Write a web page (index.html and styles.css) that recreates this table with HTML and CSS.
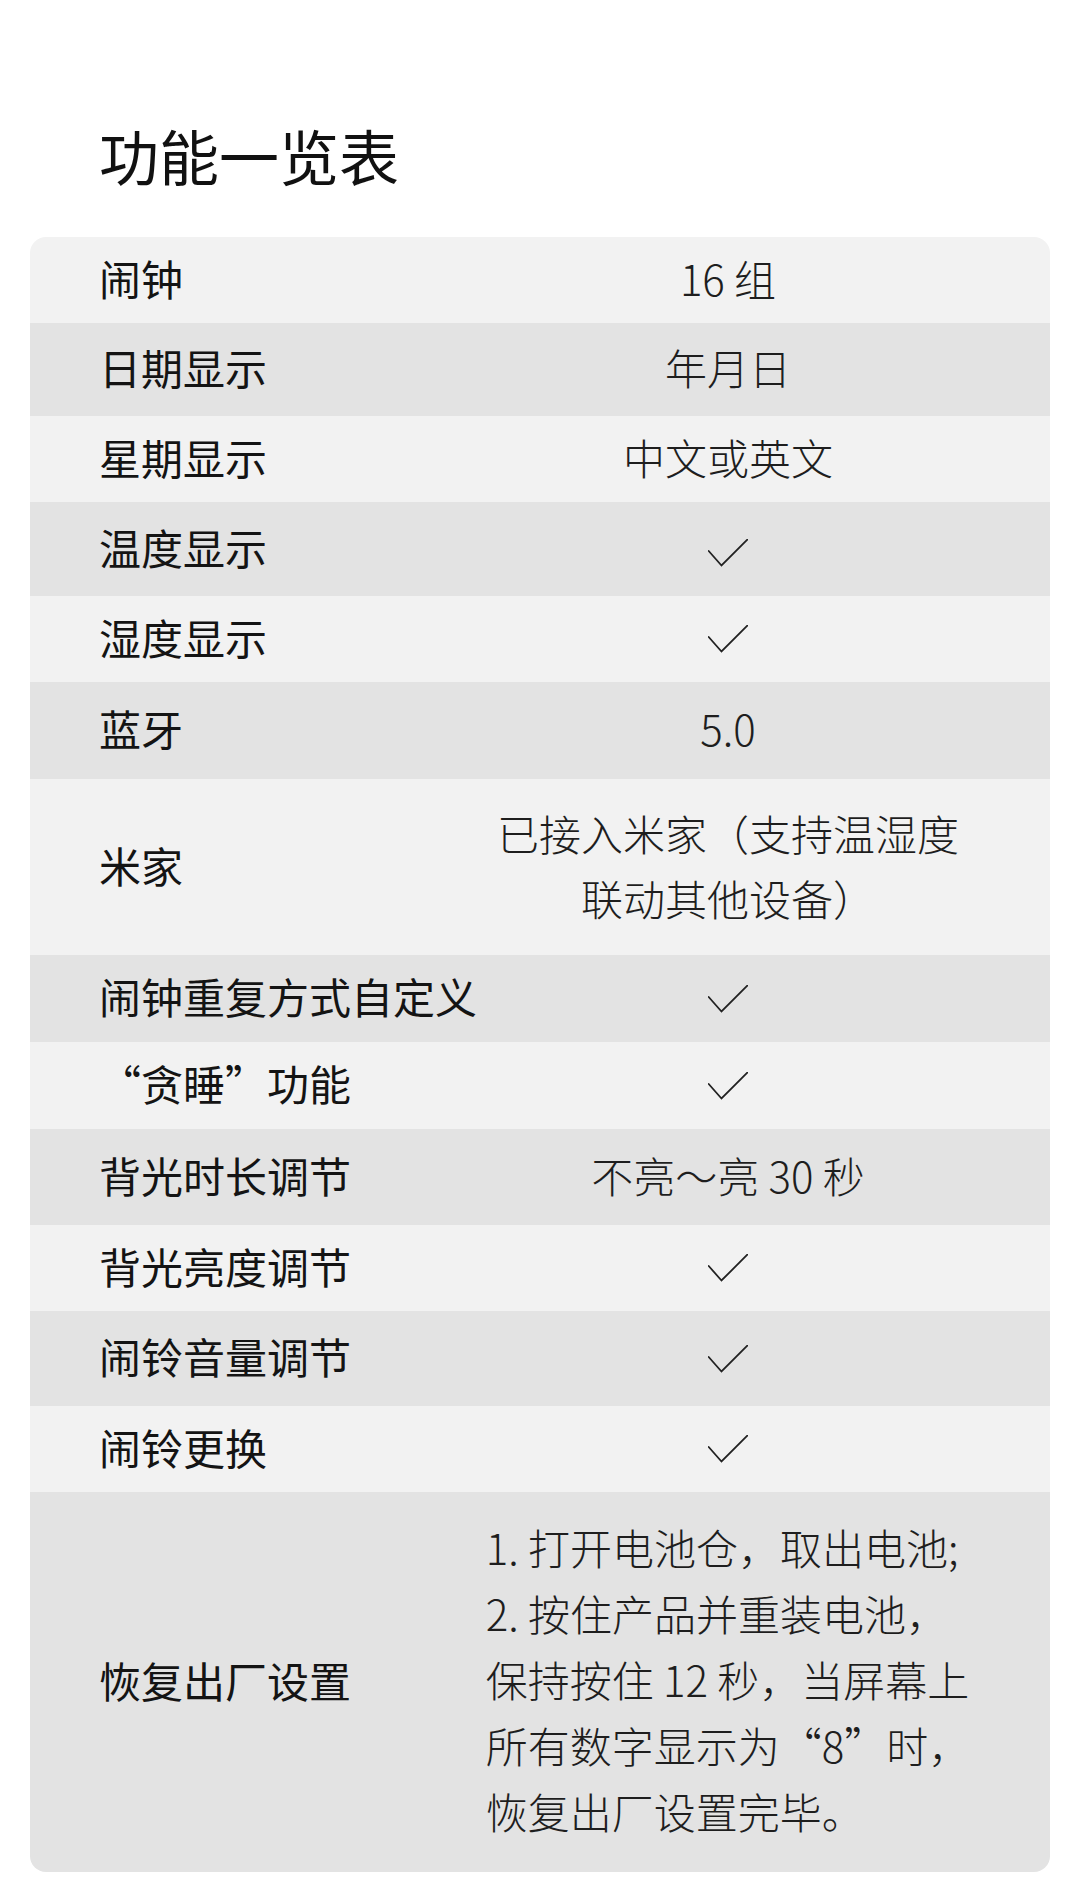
FILE: index.html
```html
<!DOCTYPE html>
<html lang="zh-CN">
<head>
<meta charset="utf-8">
<title>功能一览表</title>
<link rel="stylesheet" href="styles.css">
</head>
<body>
<main class="page">
  <h1 class="title">功能一览表</h1>
  <section class="table">
    <div class="row light h86"><div class="label">闹钟</div><div class="value">16 组</div></div>
    <div class="row dark h93"><div class="label">日期显示</div><div class="value">年月日</div></div>
    <div class="row light h86"><div class="label">星期显示</div><div class="value">中文或英文</div></div>
    <div class="row dark h94"><div class="label">温度显示</div><div class="value"><svg class="check low" viewBox="0 0 40 28"><polyline points="0.7,12 13.5,26.5 39.3,0.7"/></svg></div></div>
    <div class="row light h86"><div class="label">湿度显示</div><div class="value"><svg class="check" viewBox="0 0 40 28"><polyline points="0.7,12 13.5,26.5 39.3,0.7"/></svg></div></div>
    <div class="row dark h97"><div class="label">蓝牙</div><div class="value">5.0</div></div>
    <div class="row light h176"><div class="label">米家</div><div class="value multi">已接入米家（支持温湿度<br>联动其他设备）</div></div>
    <div class="row dark h87"><div class="label">闹钟重复方式自定义</div><div class="value"><svg class="check" viewBox="0 0 40 28"><polyline points="0.7,12 13.5,26.5 39.3,0.7"/></svg></div></div>
    <div class="row light h87"><div class="label"><span class="fw">“</span>贪睡<span class="fw">”</span>功能</div><div class="value"><svg class="check" viewBox="0 0 40 28"><polyline points="0.7,12 13.5,26.5 39.3,0.7"/></svg></div></div>
    <div class="row dark h96"><div class="label">背光时长调节</div><div class="value">不亮～亮 30 秒</div></div>
    <div class="row light h86"><div class="label">背光亮度调节</div><div class="value"><svg class="check" viewBox="0 0 40 28"><polyline points="0.7,12 13.5,26.5 39.3,0.7"/></svg></div></div>
    <div class="row dark h95"><div class="label">闹铃音量调节</div><div class="value"><svg class="check" viewBox="0 0 40 28"><polyline points="0.7,12 13.5,26.5 39.3,0.7"/></svg></div></div>
    <div class="row light h86"><div class="label">闹铃更换</div><div class="value"><svg class="check" viewBox="0 0 40 28"><polyline points="0.7,12 13.5,26.5 39.3,0.7"/></svg></div></div>
    <div class="row dark h380"><div class="label">恢复出厂设置</div><div class="value steps">1. 打开电池仓，取出电池;<br>2. 按住产品并重装电池，<br>保持按住 12 秒，当屏幕上<br>所有数字显示为<span class="fw">“</span>8<span class="fw">”</span>时，<br>恢复出厂设置完毕。</div></div>
  </section>
</main>
</body>
</html>
```
FILE: styles.css
```css
html, body {
  margin: 0;
  padding: 0;
  background: #ffffff;
}

body {
  font-family: "Noto Sans CJK SC", "Noto Sans", sans-serif;
  color: #141414;
}

.page {
  width: 1080px;
  height: 1902px;
  padding-top: 125px;
  box-sizing: border-box;
}

.title {
  margin: 0 0 52px 99px;
  font-size: 60px;
  line-height: 60px;
  font-weight: 400;
  color: #111111;
}

.table {
  margin: 0 30px;
  border-radius: 16px;
  overflow: hidden;
}

.row {
  display: grid;
  grid-template-columns: 376px 1fr;
  align-items: center;
}

.light { background: #f2f2f2; }
.dark { background: #e3e3e3; }

.h86 { height: 86px; }
.h87 { height: 87px; }
.h93 { height: 93px; }
.h94 { height: 94px; }
.h95 { height: 95px; }
.h96 { height: 96px; }
.h97 { height: 97px; }
.h176 { height: 176px; }
.h380 { height: 380px; }

.label {
  padding-left: 69px;
  padding-bottom: 5px;
  font-size: 42px;
  line-height: 50px;
  font-weight: 400;
  color: #141414;
  white-space: nowrap;
}

.fw {
  font-feature-settings: "fwid" 1;
}

.value {
  text-align: center;
  font-family: "Noto Sans CJK SC Light", "Noto Sans CJK SC", "Noto Sans", sans-serif;
  font-size: 42px;
  line-height: 50px;
  font-weight: 300;
  color: #1e1e1e;
  display: flex;
  justify-content: center;
  align-items: center;
  padding-bottom: 5px;
}

.value.multi {
  display: block;
  line-height: 65px;
}

.value.steps {
  display: block;
  justify-self: center;
  text-align: left;
  line-height: 66px;
  font-size: 42px;
  padding-bottom: 6px;
}

.check {
  width: 40px;
  height: 28px;
  fill: none;
  stroke: #222222;
  stroke-width: 1.8;
  stroke-linecap: round;
  stroke-linejoin: miter;
  margin-top: 5px;
}

.check.low {
  margin-top: 12px;
}
```
